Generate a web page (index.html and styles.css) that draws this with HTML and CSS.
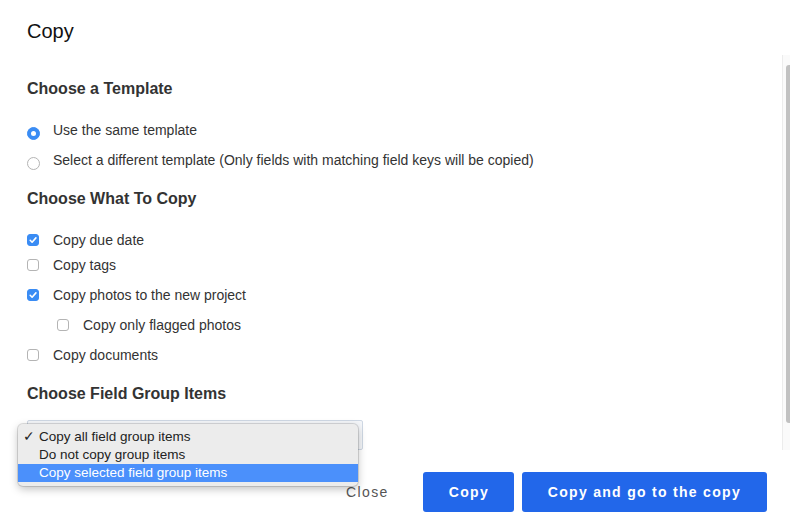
FILE: index.html
```html
<!DOCTYPE html>
<html lang="en">

<head>
    <meta charset="UTF-8">
    <meta name="viewport" content="width=device-width, initial-scale=1.0">
    <title>Copy</title>
    <link rel="stylesheet" href="styles.css">
</head>

<body>
    <div class="modal">
        <div class="modal-header">
            <h1 class="title">Copy</h1>
        </div>

        <div class="modal-body">
            <div class="content">
                <h2 class="section">Choose a Template</h2>
                <div class="row radio-row">
                    <span class="radio on"></span>
                    <span class="label">Use the same template</span>
                </div>
                <div class="row radio-row gap10">
                    <span class="radio"></span>
                    <span class="label">Select a different template (Only fields with matching field keys will be copied)</span>
                </div>

                <h2 class="section s2">Choose What To Copy</h2>
                <div class="row">
                    <span class="check on">
                        <svg viewBox="0 0 12 12" width="12" height="12"><path d="M3.2 6.3l1.9 1.9 3.8-4.3" fill="none" stroke="#fff" stroke-width="1.6" stroke-linecap="round" stroke-linejoin="round"/></svg>
                    </span>
                    <span class="label">Copy due date</span>
                </div>
                <div class="row gap5">
                    <span class="check"></span>
                    <span class="label">Copy tags</span>
                </div>
                <div class="row gap10">
                    <span class="check on">
                        <svg viewBox="0 0 12 12" width="12" height="12"><path d="M3.2 6.3l1.9 1.9 3.8-4.3" fill="none" stroke="#fff" stroke-width="1.6" stroke-linecap="round" stroke-linejoin="round"/></svg>
                    </span>
                    <span class="label">Copy photos to the new project</span>
                </div>
                <div class="row gap10 indent">
                    <span class="check"></span>
                    <span class="label">Copy only flagged photos</span>
                </div>
                <div class="row gap10">
                    <span class="check"></span>
                    <span class="label">Copy documents</span>
                </div>

                <h2 class="section s2">Choose Field Group Items</h2>
                <div class="select-wrap">
                    <div class="select"></div>
                    <ul class="menu">
                        <li class="item"><span class="tick">&#10003;</span>Copy all field group items</li>
                        <li class="item">Do not copy group items</li>
                        <li class="item active">Copy selected field group items</li>
                    </ul>
                </div>
            </div>
            <div class="scrollbar">
                <div class="thumb"></div>
            </div>
        </div>

        <div class="modal-footer">
            <button class="btn-link">Close</button>
            <button class="btn-primary copy">Copy</button>
            <button class="btn-primary">Copy and go to the copy</button>
        </div>
    </div>
</body>

</html>
```

FILE: styles.css
```css
* {
    margin: 0;
    padding: 0;
    box-sizing: border-box;
}

body {
    background-color: #fff;
    font-family: "Liberation Sans", Arial, sans-serif;
    color: #333;
    width: 790px;
    height: 528px;
    overflow: hidden;
}

.modal-header {
    height: 55px;
    padding: 19px 27px 0;
}

.title {
    font-size: 20px;
    line-height: 24px;
    font-weight: normal;
    color: #111;
}

.modal-body {
    display: flex;
    height: 395px;
    position: relative;
    z-index: 2;
}

.content {
    flex: 1;
    padding-left: 27px;
}

.section {
    font-size: 16px;
    line-height: 20px;
    font-weight: bold;
    color: #333;
    margin-top: 24px;
    margin-bottom: 21px;
}

.s2 {
    margin-top: 19px;
}

.row {
    display: flex;
    align-items: center;
    height: 20px;
    font-size: 14px;
}

.gap5 {
    margin-top: 5px;
}

.gap10 {
    margin-top: 10px;
}

.indent {
    padding-left: 30px;
}

.label {
    line-height: 20px;
    color: #333;
}

.radio {
    width: 13px;
    height: 13px;
    border-radius: 50%;
    border: 1px solid #b4b4b4;
    background-color: #fff;
    margin-right: 13px;
    margin-top: 6px;
    flex: none;
    display: flex;
    align-items: center;
    justify-content: center;
}

.radio.on {
    background-color: #3a8cf4;
    border-color: #3a8cf4;
}

.radio.on::after {
    content: "";
    width: 5px;
    height: 5px;
    border-radius: 50%;
    background-color: #fff;
}

.check {
    width: 12px;
    height: 12px;
    border: 1px solid #b4b4b4;
    border-radius: 3px;
    background-color: #fff;
    margin-right: 14px;
    flex: none;
    display: flex;
}

.check.on {
    background-color: #3a8cf4;
    border-color: #3a8cf4;
}

.check.on svg {
    margin: -1px;
}

.select-wrap {
    position: relative;
    width: 336px;
    height: 30px;
    margin-top: -5px;
}

.select {
    height: 30px;
    border: 1px solid #cfd8e4;
    border-radius: 2px;
    background-color: #f4f6f9;
}

.menu {
    position: absolute;
    left: -9px;
    top: 4px;
    width: 340px;
    list-style: none;
    background-color: #ececec;
    border-radius: 5px;
    padding: 4px 0;
    box-shadow: 0 0 0 1px rgba(0, 0, 0, 0.12), 0 3px 9px rgba(0, 0, 0, 0.25);
    font-size: 13.5px;
    color: #222;
    z-index: 5;
}

.item {
    height: 18px;
    line-height: 18px;
    padding-left: 21px;
    position: relative;
}

.item.active {
    background-color: #4b90fb;
    color: #fff;
}

.tick {
    position: absolute;
    left: 5px;
    top: 0;
}

.scrollbar {
    width: 8px;
    flex: none;
    background-color: #fafafa;
    border-left: 1px solid #ececec;
    padding-top: 10px;
}

.thumb {
    width: 4px;
    margin-left: 3px;
    height: 358px;
    border-radius: 3px 0 0 3px;
    background-color: #c1c1c1;
}

.modal-footer {
    display: flex;
    justify-content: flex-end;
    align-items: center;
    padding: 22px 23px 0 0;
}

.btn-link {
    border: none;
    background: none;
    font-family: "Liberation Sans", Arial, sans-serif;
    font-size: 14px;
    letter-spacing: 1.4px;
    color: #555;
    margin-right: 34px;
    cursor: pointer;
}

.btn-primary {
    height: 40px;
    border: none;
    border-radius: 3px;
    background-color: #2267ea;
    color: #fff;
    font-family: "Liberation Sans", Arial, sans-serif;
    font-size: 14px;
    font-weight: bold;
    letter-spacing: 1.3px;
    padding: 0 26px;
    cursor: pointer;
}

.btn-primary.copy {
    width: 91px;
    margin-right: 8px;
}
```
